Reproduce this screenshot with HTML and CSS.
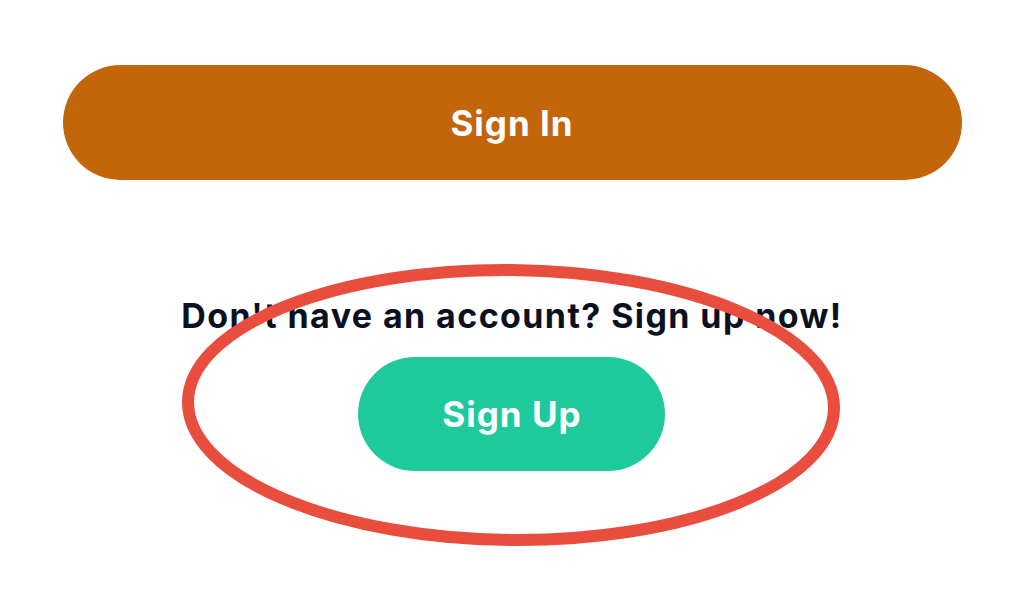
FILE: index.html
```html
<!DOCTYPE html>
<html lang="en">
<head>
  <meta charset="UTF-8">
  <meta name="viewport" content="width=device-width, initial-scale=1.0">
  <title>Sign In</title>
  <link rel="stylesheet" href="styles.css">
</head>
<body>
  <div class="container">
    <button class="btn btn-signin">Sign In</button>

    <div class="signup">
      <p class="signup-text">Don't have an account? Sign up now!</p>
      <button class="btn btn-signup">Sign Up</button>

      <!-- hand drawn highlight -->
      <svg class="highlight" width="680" height="300" viewBox="0 0 680 300">
        <ellipse cx="340" cy="150" rx="323" ry="135" fill="none" stroke="#e84d3d" stroke-width="12" transform="rotate(0.6 340 150)"/>
      </svg>
    </div>
  </div>
</body>
</html>
```

FILE: styles.css
```css
* {
  margin: 0;
  padding: 0;
  box-sizing: border-box;
}

body {
  font-family: Inter, "Noto Sans", Arial, sans-serif;
  background: #fff;
  width: 1024px;
  height: 595px;
  overflow: hidden;
}

.container {
  width: 899px;
  margin: 0 auto;
  padding-top: 65px;
  display: flex;
  flex-direction: column;
  align-items: center;
}

.btn {
  border: none;
  border-radius: 60px;
  color: #fff;
  font-family: inherit;
  font-weight: 700;
  font-size: 35px;
  letter-spacing: 1px;
  cursor: pointer;
}

.btn-signin {
  width: 100%;
  height: 115px;
  background-color: #c3650a;
}

.signup {
  position: relative;
  margin-top: 116px;
  display: flex;
  flex-direction: column;
  align-items: center;
}

.signup-text {
  font-size: 34px;
  line-height: 40px;
  font-weight: 700;
  color: #0c1122;
  letter-spacing: 1.4px;
  white-space: nowrap;
}

.btn-signup {
  margin-top: 21px;
  width: 307px;
  height: 114px;
  background-color: #1ec99b;
}

.highlight {
  position: absolute;
  left: 50%;
  top: -41px;
  margin-left: -341px;
  pointer-events: none;
}
```
